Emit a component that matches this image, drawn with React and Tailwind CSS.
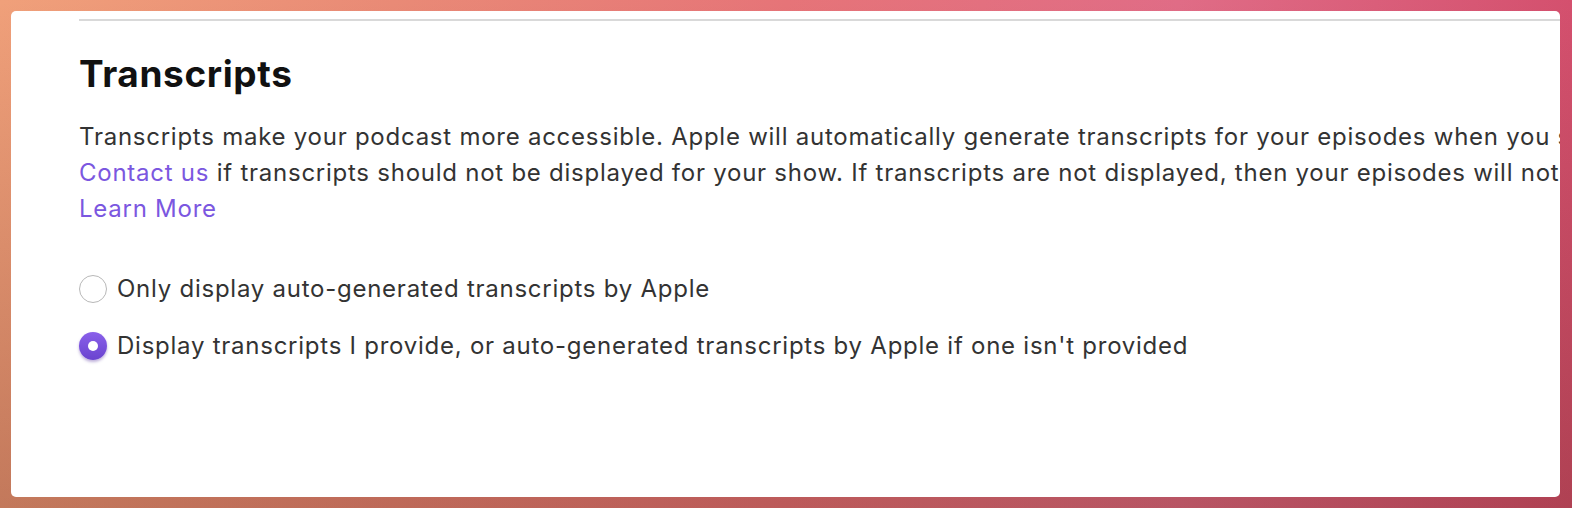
function Radio({ checked }) {
    if (checked) {
        return (
            <span className="flex h-7 w-7 shrink-0 items-center justify-center rounded-full bg-linear-to-b from-[#8a60ea] to-[#6a43cf] shadow-[0_2px_3px_rgba(70,30,150,0.35)]">
                <span className="h-[10px] w-[10px] rounded-full bg-white" />
            </span>
        );
    }
    return <span className="h-7 w-7 shrink-0 rounded-full border-[1.5px] border-[#b8b8b8] bg-white" />;
}

function Option({ checked, label }) {
    return (
        <label className="flex h-9 items-center gap-[10px]">
            <Radio checked={checked} />
            <span className="whitespace-nowrap">{label}</span>
        </label>
    );
}

export default function App() {
    return (
        <div className="h-[508px] w-[1572px] overflow-hidden bg-[linear-gradient(to_bottom,rgba(0,0,0,0)_0%,rgba(90,30,20,0.3)_100%),linear-gradient(to_right,#f0a07a_0%,#e98a76_25%,#e67478_50%,#e06c86_75%,#d4506e_100%)] pl-[11px] pt-[11px] font-['Inter',sans-serif]">
            <section className="h-[486px] w-[1549px] overflow-hidden rounded-[5px] bg-white pl-[68px] pt-[8px]">
                <div className="h-[2px] bg-[#d9d9d9]" />
                <h2 className="mt-[31px] text-[37px] font-bold leading-[43px] tracking-[0.6px] text-[#111]">Transcripts</h2>
                <div className="mt-[24px] text-[24px] leading-[36px] tracking-[0.75px] text-[#333]">
                    <p className="whitespace-nowrap">
                        Transcripts make your podcast more accessible. Apple will automatically generate transcripts for your episodes when you submit them.
                    </p>
                    <p className="whitespace-nowrap">
                        <a className="text-[#7b57e0]">Contact us</a> if transcripts should not be displayed for your show. If transcripts are not displayed, then your episodes will not be searchable.
                    </p>
                    <p>
                        <a className="text-[#7b57e0]">Learn More</a>
                    </p>
                </div>
                <div className="mt-[44px] flex flex-col gap-[21px] text-[24px] tracking-[0.75px] text-[#333]">
                    <Option label="Only display auto-generated transcripts by Apple" />
                    <Option checked label="Display transcripts I provide, or auto-generated transcripts by Apple if one isn't provided" />
                </div>
            </section>
        </div>
    );
}
